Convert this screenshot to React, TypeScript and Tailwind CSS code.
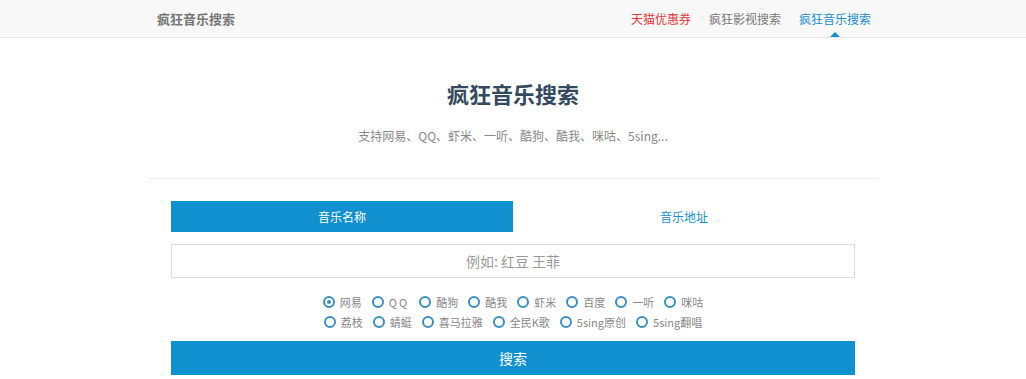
import React from "react";

const row1 = ["网易", "QQ", "酷狗", "酷我", "虾米", "百度", "一听", "咪咕"];
const row2 = ["荔枝", "蜻蜓", "喜马拉雅", "全民K歌", "5sing原创", "5sing翻唱"];

function Radio({ label, checked }: { label: string; checked?: boolean }) {
  return (
    <label className="flex items-center gap-[5px] text-[11px] text-[#888] leading-none">
      <span className="w-[12px] h-[12px] rounded-full border-2 border-[#3b8fbe] flex items-center justify-center bg-white">
        {checked && <span className="w-[4px] h-[4px] rounded-full bg-[#3b8fbe]" />}
      </span>
      <span className={label === "QQ" ? "tracking-[2px]" : ""}>{label}</span>
    </label>
  );
}

export default function App() {
  return (
    <div
      className="w-[1026px] h-[379px] bg-white overflow-hidden"
      style={{ fontFamily: '"Noto Sans CJK SC", "Noto Sans", sans-serif' }}
    >
      <header className="h-[38px] bg-[#f8f8f8] border-b border-[#e7e7e7]">
        <div className="w-[720px] mx-auto h-full flex items-center justify-between pl-[4px] pr-[2px]">
          <div className="text-[13px] font-bold text-[#777]">疯狂音乐搜索</div>
          <nav className="flex items-center gap-[18px] text-[12px] h-full">
            <a className="text-[#e4393c]">天猫优惠券</a>
            <a className="text-[#777]">疯狂影视搜索</a>
            <a className="text-[#1a8fd0] relative h-full flex items-center">
              疯狂音乐搜索
              <span className="absolute left-1/2 -translate-x-1/2 bottom-0 w-0 h-0 border-l-[5px] border-r-[5px] border-b-[5px] border-l-transparent border-r-transparent border-b-[#1a8fd0]" />
            </a>
          </nav>
        </div>
      </header>

      <div className="w-[730px] mx-auto">
        <div className="pt-[40px] pb-[34px] border-b border-[#eee] text-center">
          <h1 className="text-[22px] font-bold text-[#34495e] leading-[30px]">疯狂音乐搜索</h1>
          <p className="mt-[20px] text-[12px] text-[#888] leading-[16px]">
            支持网易、QQ、虾米、一听、酷狗、酷我、咪咕、5sing...
          </p>
        </div>

        <div className="w-[684px] mx-auto pt-[22px]">
          <div className="flex h-[31px] text-[12px]">
            <div className="flex-1 bg-[#1190d0] text-white flex items-center justify-center">音乐名称</div>
            <div className="flex-1 text-[#1a8fd0] flex items-center justify-center">音乐地址</div>
          </div>
          <div className="mt-[12px] h-[34px] border border-[#ddd] flex items-center justify-center text-[14px] text-[#999]">
            例如: 红豆 王菲
          </div>
          <div className="mt-[18px] flex flex-col items-center gap-[8px]">
            <div className="flex items-center gap-[10px]">
              {row1.map((l, i) => (
                <Radio key={l} label={l} checked={i === 0} />
              ))}
            </div>
            <div className="flex items-center gap-[10px]">
              {row2.map((l) => (
                <Radio key={l} label={l} />
              ))}
            </div>
          </div>
          <button className="mt-[13px] w-full h-[34px] bg-[#1190d0] text-white text-[14px] flex items-center justify-center">
            搜索
          </button>
        </div>
      </div>
    </div>
  );
}
